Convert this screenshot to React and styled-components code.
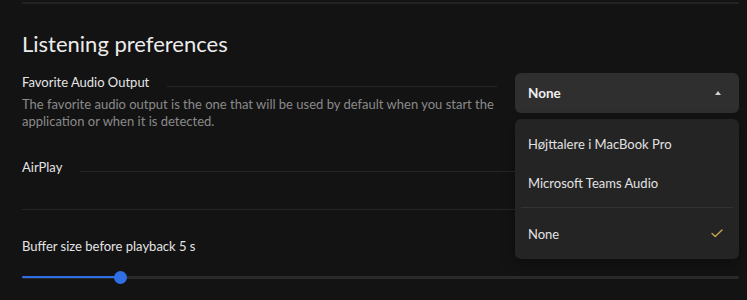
import React from "react";
import styled, { createGlobalStyle } from "styled-components";

const Global = createGlobalStyle`
  html, body { margin: 0; padding: 0; background: #131313; }
  body { font-family: "Lato", "Noto Sans", sans-serif; color: #e6e6e6; overflow: hidden; }
`;

const Page = styled.div`
  padding: 0 8px 0 22px;
  width: 747px;
  height: 300px;
  box-sizing: border-box;
`;

const TopRule = styled.div`
  margin-top: 2px;
  height: 2px;
  background: #222;
`;

const Heading = styled.h2`
  margin: 26px 0 0;
  font-size: 22px;
  line-height: 28px;
  font-weight: 400;
  color: #ececec;
`;

const Row = styled.div`
  display: flex;
  align-items: flex-start;
  gap: 18px;
  margin-top: ${(p) => p.$mt || 0}px;
`;

const LeftCol = styled.div`
  flex: 1;
  min-width: 0;
`;

const LabelRow = styled.div`
  display: flex;
  align-items: baseline;
  gap: 18px;
  margin-top: ${(p) => p.$mt || 0}px;
`;

const Label = styled.div`
  font-size: 13px;
  line-height: 18px;
  color: #e4e4e4;
  white-space: nowrap;
`;

const Rule = styled.div`
  flex: 1;
  height: 1px;
  background: #262626;
`;

const Description = styled.p`
  margin: 5px 0 0;
  font-size: 13px;
  line-height: 17px;
  color: #8a8a8a;
`;

const SelectWrap = styled.div`
  position: relative;
  width: 224px;
  flex-shrink: 0;
`;

const SelectButton = styled.div`
  height: 40px;
  box-sizing: border-box;
  padding: 0 13px;
  border-radius: 6px;
  background: #2f2f2f;
  display: flex;
  align-items: center;
  justify-content: space-between;
  font-size: 13.5px;
  font-weight: 700;
  color: #f0f0f0;
`;

const Caret = styled.span`
  width: 0;
  height: 0;
  margin-right: 5px;
  border-left: 3px solid transparent;
  border-right: 3px solid transparent;
  border-bottom: 4px solid #cfcfcf;
`;

const Menu = styled.div`
  position: absolute;
  top: 46px;
  left: 0;
  right: 0;
  z-index: 5;
  padding: 5px 0 6px;
  border-radius: 6px;
  background: #242424;
  box-shadow: 0 4px 14px rgba(0, 0, 0, 0.35);
`;

const Item = styled.div`
  height: 39px;
  padding: 0 13px;
  display: flex;
  align-items: center;
  justify-content: space-between;
  font-size: 13px;
  color: #e2e2e2;
`;

const MenuDivider = styled.div`
  height: 1px;
  margin: 5px 6px 6px;
  background: #333;
`;

const Divider = styled.div`
  height: 1px;
  margin-top: ${(p) => p.$mt || 0}px;
  background: #262626;
`;

const Slider = styled.div`
  margin-top: 15px;
  height: 14px;
  display: flex;
  align-items: center;
`;

const Track = styled.div`
  position: relative;
  flex: 1;
  height: 3px;
  border-radius: 2px;
  background: #2a2a2a;
`;

const Fill = styled.div`
  position: absolute;
  left: 0;
  top: 0;
  height: 2px;
  background: #2f6fe6;
  border-radius: 2px;
`;

const Thumb = styled.div`
  position: absolute;
  top: 50%;
  width: 13px;
  height: 13px;
  margin: -6.5px 0 0 -6.5px;
  border-radius: 50%;
  background: #2f6fe6;
`;

const Check = () => (
  <svg width="12" height="9" viewBox="0 0 12 9" fill="none" style={{ marginRight: 3 }}>
    <path d="M1 4.6 L4.2 7.6 L11 1" stroke="#c9a24e" strokeWidth="1.4" strokeLinecap="round" strokeLinejoin="round" />
  </svg>
);

export default function App() {
  const pct = 98 / 717;
  return (
    <Page>
      <Global />
      <TopRule />
      <Heading>Listening preferences</Heading>
      <Row $mt={15}>
        <LeftCol>
          <LabelRow>
            <Label>Favorite Audio Output</Label>
            <Rule />
          </LabelRow>
          <Description>
            The favorite audio output is the one that will be used by default when you start the
            application or when it is detected.
          </Description>
        </LeftCol>
        <SelectWrap>
          <SelectButton>
            None
            <Caret />
          </SelectButton>
          <Menu>
            <Item>Højttalere i MacBook Pro</Item>
            <Item>Microsoft Teams Audio</Item>
            <MenuDivider />
            <Item>
              None
              <Check />
            </Item>
          </Menu>
        </SelectWrap>
      </Row>
      <LabelRow $mt={28}>
        <Label>AirPlay</Label>
        <Rule />
      </LabelRow>
      <Divider $mt={33} />
      <LabelRow $mt={27}>
        <Label>Buffer size before playback 5 s</Label>
      </LabelRow>
      <Slider>
        <Track>
          <Fill style={{ width: `${pct * 100}%` }} />
          <Thumb style={{ left: `${pct * 100}%` }} />
        </Track>
      </Slider>
    </Page>
  );
}
